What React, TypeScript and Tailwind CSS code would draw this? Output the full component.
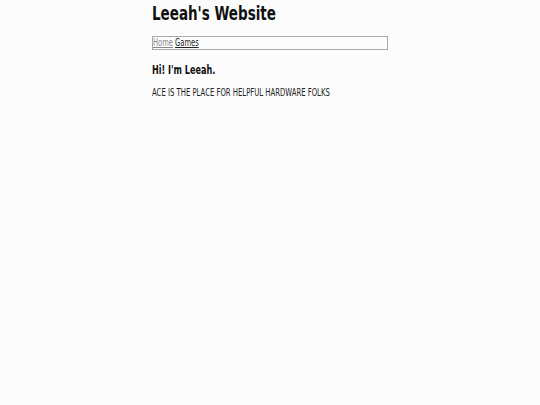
import React from 'react';

// Page d'accueil simple, boîte de navigation encadrée
// Le texte de la capture est étroit : on le resserre horizontalement
const narrow = 'inline-block origin-left scale-x-[0.75] whitespace-nowrap';

export default function App() {
  return (
    <div
      className="min-h-[405px] bg-[#fcfcfc] text-[#111]"
      style={{ fontFamily: '"DejaVu Sans Condensed", "DejaVu Sans", sans-serif' }}
    >
      <div className="mx-auto w-[236px] pt-[1px]">
        <h1 className="text-[20px] font-bold leading-[24px]">
          <span className={narrow}>Leeah's Website</span>
        </h1>
        <nav className="mt-[11px] border border-[#a8a8a8] h-[14px] flex items-center text-[10px] leading-[12px]">
          <span className={narrow}>
            <a href="#" className="underline text-[#8a8a8a]">Home</a>{' '}
            <a href="#" className="underline text-[#222]">Games</a>
          </span>
        </nav>
        <h2 className="mt-[13px] text-[12px] font-bold leading-[14px]">
          <span className={narrow}>Hi! I'm Leeah.</span>
        </h2>
        <p className="mt-[10px] text-[10px] leading-[12px] text-[#222]">
          <span className="inline-block origin-left scale-x-[0.765] whitespace-nowrap">
            ACE IS THE PLACE FOR HELPFUL HARDWARE FOLKS
          </span>
        </p>
      </div>
    </div>
  );
}
